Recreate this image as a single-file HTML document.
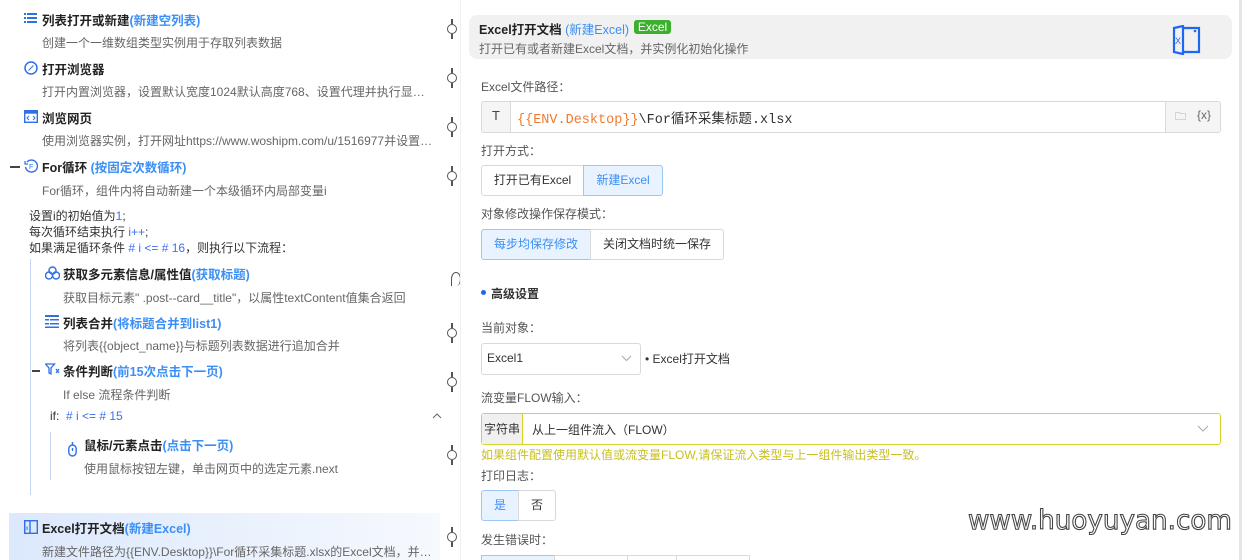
<!DOCTYPE html>
<html style="width:1242px;height:560px;overflow:hidden"><head><meta charset="utf-8"><style>
*{margin:0;padding:0;box-sizing:border-box}
body{width:1242px;height:560px;overflow:hidden;background:#fff;font-family:"Liberation Sans","Noto Sans CJK SC",sans-serif;font-size:12px;color:#333;position:relative}
.a{position:absolute;white-space:nowrap}
.t{font-weight:bold;font-size:12.5px;color:#222}
.t b{color:#3b8ff5;font-weight:bold}
.d{color:#666;font-size:12px}
.blue{color:#3b6ff5}
.pin{position:absolute;left:447px;width:10px;height:10px;border:1.5px solid #555;border-radius:50%}
.pin:before,.pin:after{content:"";position:absolute;left:3px;width:1.5px;height:5px;background:#555}
.pin:before{top:-6px}.pin:after{bottom:-6px}
.lbl{position:absolute;left:481px;color:#555;font-size:12px}
.box{position:absolute;border:1px solid #d9d9d9;border-radius:3px}
.btn{position:absolute;border:1px solid #d9d9d9;height:31px;line-height:29px;text-align:center;font-size:12px;color:#333}
.on{background:#e8f3ff;border-color:#9cc7f5;color:#3b8ff5}
</style></head><body>
<svg class="a" style="left:24px;top:12px" width="13" height="13" viewBox="0 0 13 13" fill="#2f6fe8"><rect x="0" y="1" width="2" height="2"/><rect x="3" y="1" width="10" height="2"/><rect x="0" y="5" width="2" height="2"/><rect x="3" y="5" width="10" height="2"/><rect x="0" y="9" width="2" height="2"/><rect x="3" y="9" width="10" height="2"/></svg>
<div class="a t" style="left:42px;top:10px">列表打开或新建<b>(新建空列表)</b></div>
<div class="a d" style="left:42px;top:34px">创建一个一维数组类型实例用于存取列表数据</div>
<svg class="a" style="left:24px;top:61px" width="14" height="14" viewBox="0 0 14 14"><circle cx="7" cy="7" r="6" fill="none" stroke="#2f6fe8" stroke-width="1.5"/><path d="M9.5 4.5L6 8 4.5 9.5 8 6z" fill="#2f6fe8" stroke="#2f6fe8"/></svg>
<div class="a t" style="left:42px;top:59px">打开浏览器</div>
<div class="a d" style="left:42px;top:83px">打开内置浏览器，设置默认宽度1024默认高度768、设置代理并执行显…</div>
<svg class="a" style="left:24px;top:110px" width="14" height="13" viewBox="0 0 14 13"><rect x="0.7" y="0.7" width="12.6" height="11.6" fill="none" stroke="#2f6fe8" stroke-width="1.4"/><rect x="0.7" y="0.7" width="12.6" height="3" fill="#2f6fe8"/><path d="M5 6l-2 2 2 2M9 6l2 2-2 2" stroke="#2f6fe8" fill="none"/></svg>
<div class="a t" style="left:42px;top:108px">浏览网页</div>
<div class="a d" style="left:42px;top:132px">使用浏览器实例，打开网址https://www.woshipm.com/u/1516977并设置…</div>
<div class="a" style="left:10px;top:166px;width:10px;height:1.5px;background:#444"></div>
<svg class="a" style="left:24px;top:159px" width="14" height="14" viewBox="0 0 14 14"><path d="M3 3A6 6 0 1 1 1.5 8" fill="none" stroke="#2f6fe8" stroke-width="1.4"/><path d="M1 2v3h3" fill="none" stroke="#2f6fe8" stroke-width="1.2"/><text x="5" y="10" font-size="7" fill="#2f6fe8" font-family="Liberation Sans">F</text></svg>
<div class="a t" style="left:42px;top:157px">For循环 <b>(按固定次数循环)</b></div>
<div class="a d" style="left:42px;top:182px">For循环，组件内将自动新建一个本级循环内局部变量i</div>
<div class="a" style="left:29px;top:208px;line-height:16px;color:#333">设置i的初始值为<span class="blue">1</span>;<br>每次循环结束执行 <span class="blue">i++</span>;<br>如果满足循环条件 <span class="blue"># i &lt;= # 16</span>，则执行以下流程：</div>
<div class="a" style="left:30px;top:259px;width:1px;height:236px;background:#c5d5f5"></div>
<svg class="a" style="left:45px;top:266px" width="15" height="14" viewBox="0 0 15 14" fill="none" stroke="#2f6fe8" stroke-width="1.4"><circle cx="7.5" cy="4.5" r="3.5"/><circle cx="4" cy="9.5" r="3.5"/><circle cx="11" cy="9.5" r="3.5"/></svg>
<div class="a t" style="left:63px;top:264px">获取多元素信息/属性值<b>(获取标题)</b></div>
<div class="a d" style="left:63px;top:289px">获取目标元素" .post--card__title"，以属性textContent值集合返回</div>
<svg class="a" style="left:45px;top:315px" width="14" height="13" viewBox="0 0 14 13" fill="#2f6fe8"><rect x="0" y="0" width="14" height="2"/><rect x="0" y="4" width="4" height="1.5"/><rect x="5" y="4" width="9" height="1.5"/><rect x="0" y="8" width="4" height="1.5"/><rect x="5" y="8" width="9" height="1.5"/><rect x="0" y="11.5" width="14" height="1.5"/></svg>
<div class="a t" style="left:63px;top:313px">列表合并<b>(将标题合并到list1)</b></div>
<div class="a d" style="left:63px;top:337px">将列表{{object_name}}与标题列表数据进行追加合并</div>
<div class="a" style="left:32px;top:370px;width:8px;height:1.5px;background:#444"></div>
<svg class="a" style="left:45px;top:363px" width="15" height="12" viewBox="0 0 15 12" fill="none" stroke="#2f6fe8" stroke-width="1.3"><path d="M0.5 1h9L6 5v6L4 10V5z"/><path d="M11 6l3 4M14 6l-3 4"/></svg>
<div class="a t" style="left:63px;top:361px">条件判断<b>(前15次点击下一页)</b></div>
<div class="a d" style="left:63px;top:386px">If else 流程条件判断</div>
<div class="a" style="left:50px;top:409px;color:#333">if:&nbsp; <span class="blue"># i &lt;= # 15</span></div>
<svg class="a" style="left:432px;top:413px" width="10" height="6" viewBox="0 0 10 6"><path d="M1 5l4-4 4 4" fill="none" stroke="#666"/></svg>
<div class="a" style="left:50px;top:432px;width:1px;height:48px;background:#c5d5f5"></div>
<svg class="a" style="left:68px;top:442px" width="9" height="15" viewBox="0 0 9 15" fill="none" stroke="#2f6fe8" stroke-width="1.4"><rect x="0.8" y="3" width="7.4" height="11" rx="3.7"/><path d="M4.5 6v3M4.5 0v3"/></svg>
<div class="a t" style="left:84px;top:435px">鼠标/元素点击<b>(点击下一页)</b></div>
<div class="a d" style="left:84px;top:460px">使用鼠标按钮左键，单击网页中的选定元素.next</div>
<div class="a" style="left:9px;top:513px;width:431px;height:47px;background:linear-gradient(90deg,#dce8fc,#eef4fd 70%,#f6f9fe)"></div>
<svg class="a" style="left:24px;top:520px" width="14" height="14" viewBox="0 0 14 14" fill="none" stroke="#2f6fe8" stroke-width="1.4"><rect x="0.7" y="0.7" width="12.6" height="12.6"/><path d="M6 0.7v12.6"/><text x="1.5" y="10" font-size="6" fill="#2f6fe8" stroke="none">x</text></svg>
<div class="a t" style="left:42px;top:518px">Excel打开文档<b>(新建Excel)</b></div>
<div class="a d" style="left:42px;top:543px">新建文件路径为{{ENV.Desktop}}\For循环采集标题.xlsx的Excel文档，并…</div>
<div class="pin" style="top:24px"></div><div class="pin" style="top:73px"></div><div class="pin" style="top:122px"></div><div class="pin" style="top:171px"></div><div class="pin" style="top:328px"></div><div class="pin" style="top:377px"></div><div class="pin" style="top:450px"></div><div class="pin" style="top:532px"></div>
<div class="a" style="left:451px;top:272px;width:10px;height:14px;border:1.5px solid #555;border-radius:50% 50% 50% 0;border-bottom:none"></div>
<div class="a" style="left:460px;top:0;width:1px;height:560px;background:#f0f0f0"></div>
<div class="a" style="left:1239px;top:0;width:3px;height:560px;background:#e6e6e6"></div>
<div class="a" style="left:469px;top:15px;width:763px;height:44px;background:#f1f1f1;border-radius:8px"></div>
<div class="a t" style="left:479px;top:19px;font-size:12.5px">Excel打开文档 <b style="font-weight:normal">(新建Excel)</b></div>
<div class="a" style="left:634px;top:20px;width:37px;height:14px;background:#3ab02c;border-radius:3px;color:#fff;font-size:12px;line-height:14px;text-align:center">Excel</div>
<div class="a d" style="left:479px;top:40px">打开已有或者新建Excel文档，并实例化初始化操作</div>
<svg class="a" style="left:1172px;top:25px" width="30" height="30" viewBox="0 0 30 30" fill="none" stroke="#1f66f2" stroke-width="2.2"><path d="M2 3L11 1V29L2 27z"/><path d="M11 3H27V27H11"/><circle cx="23" cy="6" r="1.3" fill="#1f66f2" stroke="none"/><text x="3" y="19" font-size="9" fill="#1f66f2" stroke="none" font-family="Liberation Sans">X</text></svg>
<div class="lbl" style="top:78px">Excel文件路径：</div>
<div class="box" style="left:481px;top:101px;width:740px;height:32px;background:#f5f5f5"></div>
<div class="a" style="left:510px;top:102px;width:656px;height:30px;background:#fff;border-left:1px solid #d9d9d9;border-right:1px solid #d9d9d9"></div>
<div class="a" style="left:492px;top:108px;font-size:13px;color:#444">T</div>
<div class="a" style="left:517px;top:107px;font-family:'Liberation Mono','Noto Sans CJK SC',monospace;font-size:13.5px;color:#333"><span style="color:#f07a30">{{ENV.Desktop}}</span>\For循环采集标题.xlsx</div>
<div class="a" style="left:1175px;top:108px;font-size:11px;color:#777">🗀</div>
<div class="a" style="left:1197px;top:108px;font-size:12px;color:#666">{x}</div>
<div class="lbl" style="top:142px">打开方式：</div>
<div class="btn" style="left:481px;top:165px;width:103px;border-radius:3px 0 0 3px">打开已有Excel</div>
<div class="btn on" style="left:583px;top:165px;width:80px;border-radius:0 3px 3px 0">新建Excel</div>
<div class="lbl" style="top:205px">对象修改操作保存模式：</div>
<div class="btn on" style="left:481px;top:229px;width:110px;border-radius:3px 0 0 3px">每步均保存修改</div>
<div class="btn" style="left:590px;top:229px;width:134px;border-radius:0 3px 3px 0">关闭文档时统一保存</div>
<div class="a" style="left:481px;top:290px;width:5px;height:5px;border-radius:50%;background:#1f66f2"></div>
<div class="a" style="left:491px;top:285px;font-weight:bold;color:#333">高级设置</div>
<div class="lbl" style="top:319px">当前对象：</div>
<div class="box" style="left:481px;top:343px;width:160px;height:32px"></div>
<div class="a" style="left:487px;top:351px;color:#333">Excel1</div>
<svg class="a" style="left:621px;top:355px" width="11" height="7" viewBox="0 0 11 7"><path d="M1 1l4.5 4.5L10 1" fill="none" stroke="#aaa"/></svg>
<div class="a" style="left:645px;top:350px;color:#333">• Excel打开文档</div>
<div class="lbl" style="top:389px">流变量FLOW输入：</div>
<div class="a" style="left:481px;top:413px;width:740px;height:32px;border:1px solid #d4d42a;border-radius:3px"></div>
<div class="a" style="left:482px;top:414px;width:41px;height:30px;background:#f0f0f0;border-right:1px solid #d4d42a;color:#333;line-height:30px;text-align:center">字符串</div>
<div class="a" style="left:532px;top:421px;color:#333">从上一组件流入（FLOW）</div>
<svg class="a" style="left:1197px;top:425px" width="12" height="7" viewBox="0 0 12 7"><path d="M1 1l5 5 5-5" fill="none" stroke="#aaa"/></svg>
<div class="a" style="left:481px;top:446px;color:#c8c020">如果组件配置使用默认值或流变量FLOW,请保证流入类型与上一组件输出类型一致。</div>
<div class="lbl" style="top:467px">打印日志：</div>
<div class="btn on" style="left:481px;top:490px;width:38px;border-radius:3px 0 0 3px">是</div>
<div class="btn" style="left:518px;top:490px;width:38px;border-radius:0 3px 3px 0">否</div>
<div class="lbl" style="top:531px">发生错误时：</div>
<div class="btn on" style="left:481px;top:555px;width:74px"></div>
<div class="btn" style="left:554px;top:555px;width:74px"></div>
<div class="btn" style="left:627px;top:555px;width:50px"></div>
<div class="btn" style="left:676px;top:555px;width:74px"></div>
<div class="a" style="left:968px;top:505px;font-size:27px;line-height:32px;color:#fff;-webkit-text-stroke:1.1px #444;font-family:'DejaVu Sans',sans-serif;transform:scaleX(0.97);transform-origin:left">www.huoyuyan.com</div>
</body></html>
